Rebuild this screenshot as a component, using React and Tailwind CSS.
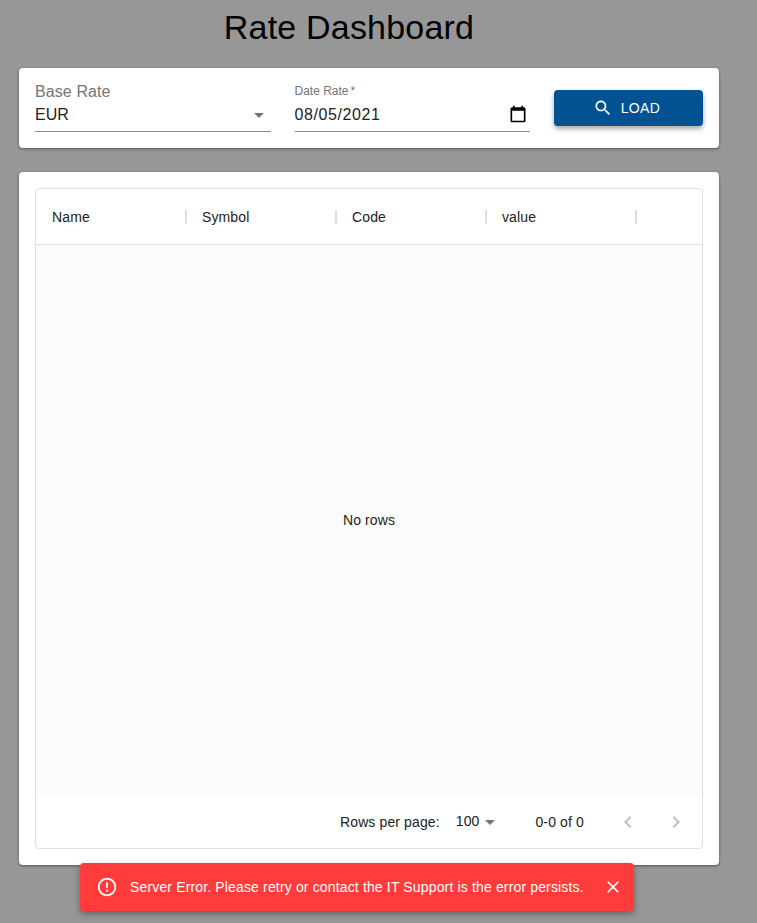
import React from 'react';

const MuiIcon = ({ d, className }) => (
  <svg viewBox="0 0 24 24" fill="currentColor" className={className}>
    <path d={d} />
  </svg>
);

const icons = {
  search: 'M15.5 14h-.79l-.28-.27C15.41 12.59 16 11.11 16 9.5 16 5.91 13.09 3 9.5 3S3 5.91 3 9.5 5.91 16 9.5 16c1.61 0 3.09-.59 4.23-1.57l.27.28v.79l5 4.99L20.49 19l-4.99-5zm-6 0C7.01 14 5 11.99 5 9.5S7.01 5 9.5 5 14 7.01 14 9.5 11.99 14 9.5 14z',
  dropdown: 'M7 10l5 5 5-5z',
  error: 'M11 15h2v2h-2zm0-8h2v6h-2zm.99-5C6.47 2 2 6.48 2 12s4.47 10 9.99 10C17.52 22 22 17.52 22 12S17.52 2 11.99 2zM12 20c-4.42 0-8-3.58-8-8s3.58-8 8-8 8 3.58 8 8-3.58 8-8 8z',
  close: 'M19 6.41L17.59 5 12 10.59 6.41 5 5 6.41 10.59 12 5 17.59 6.41 19 12 13.41 17.59 19 19 17.59 13.41 12z',
  left: 'M15.41 7.41L14 6l-6 6 6 6 1.41-1.41L10.83 12z',
  right: 'M10 6L8.59 7.41 13.17 12l-4.58 4.59L10 18l6-6z',
  calendar: 'M19 4h-1V2h-2v2H8V2H6v2H5c-1.1 0-2 .9-2 2v14c0 1.1.9 2 2 2h14c1.1 0 2-.9 2-2V6c0-1.1-.9-2-2-2zm0 16H5V8h14v12z',
};

const columns = ['Name', 'Symbol', 'Code', 'value'];

const App = () => {
  return (
    <div className="relative h-[923px] overflow-hidden bg-[#979797] font-['Liberation_Sans',Arial,sans-serif] text-[#222]">
      <h1 className="w-[698px] h-[56px] text-center text-[34px] tracking-[0.2px] leading-[55px] text-black">Rate Dashboard</h1>

      <div className="w-[700px] ml-[19px] mt-[12px] h-[80px] px-4 bg-white rounded shadow-[0_1px_3px_rgba(0,0,0,0.45)] flex gap-6">
        <div className="flex-1 h-[64px] border-b border-[#8c8c8c] relative">
          <div className="pt-[14px] text-[16px] tracking-[0.1px] leading-[19px] text-[#757575]">Base Rate</div>
          <div className="text-[16px] leading-[19px] mt-[4px]">EUR</div>
          <MuiIcon d={icons.dropdown} className="absolute right-0 top-[35px] w-6 h-6 text-[#757575]" />
        </div>
        <div className="flex-1 h-[64px] border-b border-[#8c8c8c] relative">
          <div className="pt-[16px] text-[12px] leading-[14px] text-[#757575]">Date Rate<span className="ml-[2px] text-[12px] leading-[10px]">*</span></div>
          <div className="text-[16px] tracking-[0.6px] leading-[19px] mt-[7px]">08/05/2021</div>
          <MuiIcon d={icons.calendar} className="absolute right-[2px] top-[36px] w-[20px] h-[20px] text-black" />
        </div>
        <div className="w-[149px] pt-[22px]">
          <button className="w-full h-[36px] pr-1 rounded bg-[#005293] text-white text-[14px] tracking-[0.4px] flex items-center justify-center gap-2 shadow-[0_3px_5px_rgba(0,0,0,0.35)]">
            <MuiIcon d={icons.search} className="w-5 h-5" />
            LOAD
          </button>
        </div>
      </div>

      <div className="w-[700px] ml-[19px] mt-[24px] h-[693px] p-4 bg-white rounded shadow-[0_1px_3px_rgba(0,0,0,0.45)]">
        <div className="h-[661px] border border-[#e0e0e0] rounded flex flex-col text-[14px] tracking-[0.12px]">
          <div className="h-[56px] shrink-0 border-b border-[#e0e0e0] flex items-center pt-[1px]">
            {columns.map((name) => (
              <div key={name} className="w-[150px] h-[14px] pl-4 flex items-center justify-between">
                <span>{name}</span>
                <span className="w-[2px] h-[14px] -mr-[1px] bg-[#dedede]" />
              </div>
            ))}
          </div>
          <div className="flex-1 bg-[#fcfcfc] flex items-center justify-center">No rows</div>
          <div className="h-[52px] shrink-0 flex items-center">
            <span className="ml-[304px]">Rows per page:</span>
            <span className="ml-[16px] -mt-[2px]">100</span>
            <MuiIcon d={icons.dropdown} className="-ml-[1px] w-6 h-6 text-[#757575]" />
            <span className="ml-[33px]">0-0 of 0</span>
            <MuiIcon d={icons.left} className="ml-[32px] w-6 h-6 text-[#bdbdbd]" />
            <MuiIcon d={icons.right} className="ml-[24px] w-6 h-6 text-[#bdbdbd]" />
          </div>
        </div>
      </div>

      <div className="absolute left-[80px] top-[863px] w-[554px] h-[48px] rounded bg-[#ff3b3b] text-white text-[14px] tracking-[0.15px] flex items-center pl-4 shadow-[0_3px_6px_rgba(0,0,0,0.35)]">
        <MuiIcon d={icons.error} className="w-[22px] h-[22px] shrink-0" />
        <span className="ml-[12px]">Server Error. Please retry or contact the IT Support is the error persists.</span>
        <MuiIcon d={icons.close} className="ml-[19px] w-[20px] h-[20px] shrink-0" />
      </div>
    </div>
  );
};

export default App;
